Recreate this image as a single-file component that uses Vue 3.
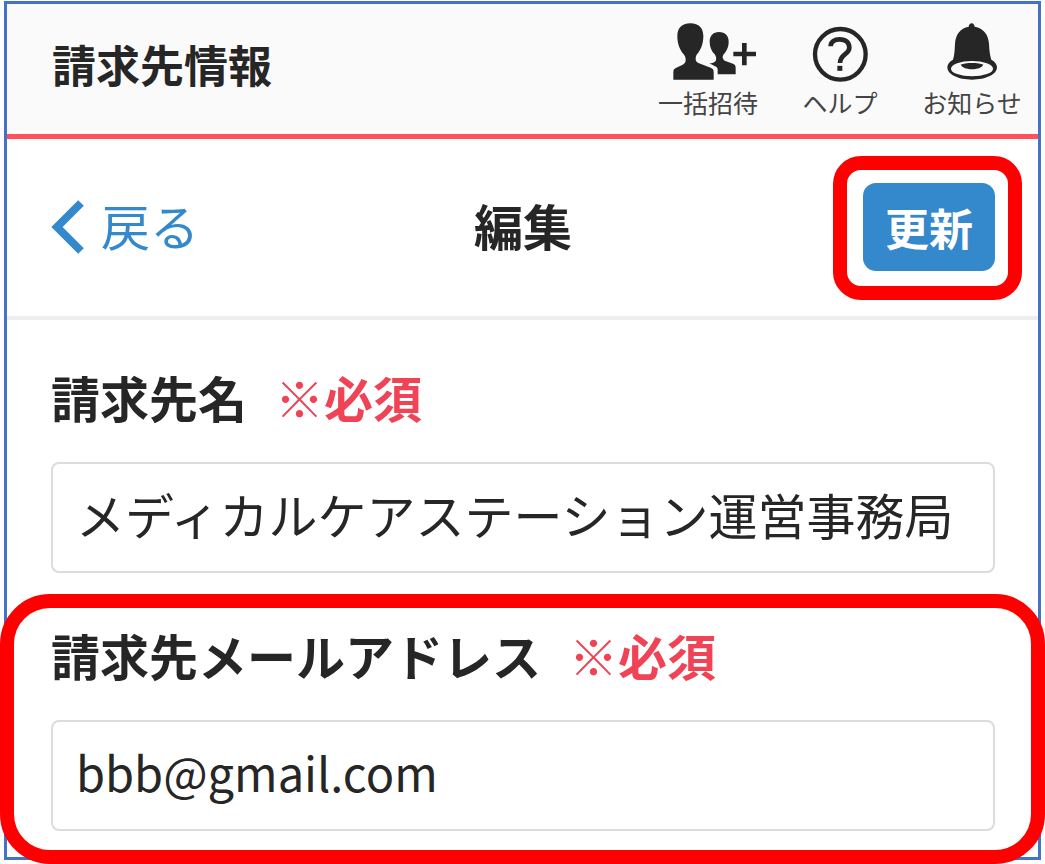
<script setup>
import { ref } from 'vue'

const billingName = ref('メディカルケアステーション運営事務局')
const billingMail = ref('bbb@gmail.com')
</script>

<template>
  <div class="screen">
    <header class="header">
      <h1 class="title">請求先情報</h1>
      <nav class="nav">
        <a class="nav-item" href="#invite">
          <svg width="98" height="60" viewBox="58 68 294 180" fill="currentColor" aria-hidden="true">
            <path d="M152 69C178 69 191 84 191 107C191 132 183 149 172 162C169 166 168 171 168 176C168 182 171 186 178 189L213 202C219 204 222 208 222 215V238H101V215C101 208 104 204 110 202L129 193C135 190 138 186 138 179C138 172 136 167 132 162C121 149 113 132 113 107C113 84 126 69 152 69Z" />
            <path d="M238 95C257 95 267 107 267 124C267 141 260 153 252 162C247 169 248 177 255 181L280 190C286 192 288 196 288 202V222H234V208C234 203 231 200 226 198L209 189C218 189 224 187 228 182C231 176 230 169 225 162C216 153 210 141 210 124C210 107 220 95 238 95Z" />
            <path d="M307 128H321V154H349V168H321V195H307V168H281V154H307Z" />
          </svg>
          <span>一括招待</span>
        </a>
        <a class="nav-item" href="#help">
          <svg width="58" height="60" viewBox="516 68 174 180" fill="none" stroke="currentColor" aria-hidden="true">
            <circle cx="604" cy="162" r="76" stroke-width="13" />
            <path d="M575 138C575 124 586 117 602 117C620 117 631 126 631 142C631 163 603 160 603 188" stroke-width="14" />
            <path d="M595 204H610" stroke-width="15" />
          </svg>
          <span>ヘルプ</span>
        </a>
        <a class="nav-item" href="#news">
          <svg width="52" height="60" viewBox="921 68 156 180" fill="currentColor" aria-hidden="true">
            <path d="M998 69C1003 69 1006 73 1007 79C1034 84 1048 102 1050 130C1051 152 1053 166 1057 178C1068 184 1074 192 1074 201C1074 222 1041 238 999 238C957 238 925 222 925 201C925 192 931 184 942 178C946 166 947 151 948 130C950 102 963 84 989 79C990 73 993 69 998 69Z" />
            <ellipse cx="999" cy="205" rx="63" ry="23" fill="#fafafa" />
            <path d="M965 193C977 186 1021 186 1033 193C1024 211 974 211 965 193Z" />
          </svg>
          <span>お知らせ</span>
        </a>
      </nav>
    </header>

    <div class="toolbar">
      <a class="back" href="#back">
        <svg width="34" height="56" viewBox="0 0 34 56" fill="none" stroke="currentColor" stroke-width="8" aria-hidden="true">
          <path d="M30 4L6 28L30 52" />
        </svg>
        <span class="toolbar-text">戻る</span>
      </a>
      <h2 class="heading toolbar-text">編集</h2>
      <div class="action marked">
        <button class="update" type="submit" form="billing">更新</button>
      </div>
    </div>

    <form id="billing" class="form" @submit.prevent>
      <div class="field">
        <label for="billing-name">請求先名<span class="required">※必須</span></label>
        <input id="billing-name" v-model="billingName" type="text" />
      </div>
      <div class="field marked marked-wide">
        <label for="billing-mail">請求先メールアドレス<span class="required">※必須</span></label>
        <input id="billing-mail" v-model="billingMail" type="email" />
      </div>
    </form>
  </div>
</template>

<style>
body {
  background: #fff;
}
</style>

<style scoped>
.screen {
  margin: 1px 4px 4px;
  border: 3px solid #4472c4;
  background: #fff;
  color: #262626;
  font-family: "Noto Sans CJK JP", sans-serif;
}

.screen * {
  box-sizing: border-box;
}

.header {
  display: flex;
  justify-content: space-between;
  padding-left: 45px;
  border-bottom: 5px solid #ff505c;
  background: #fafafa;
}

.title {
  margin: 0;
  font-size: 44px;
  line-height: 120px;
  font-weight: 700;
}

.nav {
  display: flex;
  padding: 19px 0 12px;
}

.nav-item {
  display: flex;
  flex-direction: column;
  align-items: center;
  width: 132px;
  color: #262626;
  font-size: 25px;
  line-height: 39px;
  text-decoration: none;
  white-space: nowrap;
}

.nav-item span {
  color: #444;
}

.toolbar {
  display: grid;
  grid-template-columns: 1fr auto 1fr;
  align-items: center;
  padding: 44px 43px 45px 44px;
  border-bottom: 4px solid #eee;
}

.toolbar-text {
  padding-bottom: 5px;
  font-size: 49px;
  line-height: 72px;
}

.back {
  display: flex;
  align-items: center;
  justify-self: start;
  gap: 16px;
  color: #3488cc;
  text-decoration: none;
}

.heading {
  margin: 0;
}

.action {
  justify-self: end;
}

.marked {
  position: relative;
}

.marked::after {
  content: "";
  position: absolute;
  inset: -27px -27px -29px -30px;
  border: 14px solid #f00;
  border-radius: 28px;
  pointer-events: none;
}

.marked-wide::after {
  inset: -25px -50px -33px -51px;
  border-radius: 50px;
}

.update {
  display: block;
  width: 132px;
  height: 88px;
  padding: 0;
  border: 0;
  border-radius: 13px;
  background: #3488cc;
  color: #fff;
  font: 700 44px/88px "Noto Sans CJK JP", sans-serif;
}

.form {
  display: grid;
  gap: 46px;
  padding: 41px 43px 26px 44px;
}

.field {
  display: grid;
  gap: 29px;
}

.field label {
  font-size: 49px;
  line-height: 72px;
  font-weight: 700;
}

.required {
  margin-left: 28px;
  color: #f04355;
}

.field input {
  width: 100%;
  height: 111px;
  padding: 0 23px 9px;
  border: 2px solid #dcdcdc;
  border-radius: 8px;
  background: #fff;
  color: #262626;
  font: 400 49px "Noto Sans CJK JP", sans-serif;
  outline: 0;
}

.field input[type="email"] {
  font-size: 47px;
}
</style>
